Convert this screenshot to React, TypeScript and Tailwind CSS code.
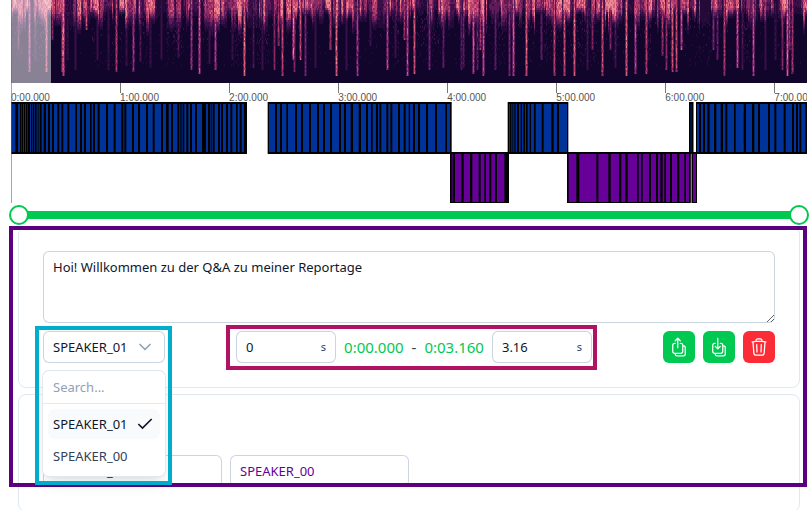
import { useMemo, useState } from "react";
import { Check, ChevronDown } from "lucide-react";
import {
  HiOutlineArrowDownOnSquareStack,
  HiOutlineArrowUpOnSquareStack,
  HiOutlineTrash,
} from "react-icons/hi2";

const SPEC_WIDTH = 796;
const SPEC_HEIGHT = 83;
const SHADES = ["#240939", "#3b0f4a", "#5f1a57", "#8a2a63", "#b53e6c", "#d75d79", "#e98a92"];

// Loud moments that reach into the high frequencies: [x, depth, strength]
const STREAKS: [number, number, number][] = [
  [18, 50, 0.45], [29, 72, 0.75], [35, 60, 0.3], [46, 72, 0.85], [52, 40, 0.6], [62, 72, 0.8], [63, 76, 0.95],
  [67, 60, 0.3], [75, 70, 0.35], [86, 30, 0.8], [97, 60, 0.35], [108, 70, 0.3], [116, 72, 0.75], [126, 65, 0.3],
  [133, 71, 0.7], [140, 62, 0.4], [150, 68, 0.3], [161, 60, 0.35], [178, 58, 0.45], [191, 70, 0.7],
  [199, 73, 0.85], [209, 64, 0.35], [215, 70, 0.8], [232, 60, 0.3], [244, 76, 0.95], [253, 68, 0.4], [262, 70, 0.3],
  [274, 70, 0.6], [278, 45, 0.7], [282, 76, 0.8], [293, 60, 0.95], [294, 72, 0.6], [300, 60, 0.8], [305, 75, 0.6],
  [315, 68, 0.35], [330, 50, 0.75], [336, 76, 0.95], [346, 70, 0.35], [357, 76, 0.7], [370, 46, 0.35],
  [387, 70, 0.8], [395, 58, 0.35], [404, 40, 0.7], [407, 76, 0.8], [414, 74, 0.85], [429, 70, 0.6],
  [443, 68, 0.5], [461, 70, 0.45], [463, 68, 0.5], [473, 74, 0.85], [477, 70, 0.5], [480, 50, 0.7], [483, 76, 0.85],
  [495, 70, 0.5], [509, 76, 0.6], [513, 76, 0.85], [526, 76, 0.9], [541, 60, 0.5], [554, 75, 0.8], [564, 76, 0.85],
  [574, 75, 0.9], [587, 70, 0.4], [592, 50, 0.6], [602, 76, 0.85], [610, 50, 0.6], [615, 68, 0.4],
  [626, 76, 0.9], [635, 74, 0.8], [646, 74, 0.8], [662, 55, 0.7], [666, 70, 0.65], [672, 72, 0.85],
  [676, 72, 0.8], [681, 50, 0.85], [713, 50, 0.6], [717, 60, 0.5], [724, 76, 0.75], [737, 68, 0.85], [742, 70, 0.4],
  [753, 76, 0.8], [765, 70, 0.35], [775, 60, 0.3], [782, 70, 0.6], [787, 76, 0.9], [789, 50, 0.7], [792, 74, 0.7],
];

function createRandom(seed: number) {
  let state = seed;
  return () => {
    state = (state * 1664525 + 1013904223) % 4294967296;
    return state / 4294967296;
  };
}

function buildSpectrogram() {
  const random = createRandom(71);
  const paths: string[][] = SHADES.map(() => []);
  let base = 0.6;
  let target = 0.6;
  let reach = 18;
  let haze = 0.1;
  for (let x = 0; x < SPEC_WIDTH; x += 1) {
    if (random() < 0.45) target = 0.12 + random() * 0.85;
    base += (target - base) * 0.75;
    if (random() < 0.3) reach = 9 + random() * 17;
    if (random() < 0.12) haze = random() < 0.5 ? 0.03 : random() * 0.5;
    const quiet = x + 11 > 699 && x + 11 < 711;
    const hits = STREAKS.filter(([sx]) => Math.abs(sx - 11 - x) <= 1);
    for (let y = 0; y < SPEC_HEIGHT - 3; y += 2) {
      let value = (quiet ? 0.2 : base) * Math.max(0, Math.min(1, 1.5 - y / reach));
      value *= 0.76 + random() * 0.32;
      if (y < 66 && random() < haze) value = Math.max(value, random() * 0.4 * (1 - y / 110));
      for (const [sx, depth, strength] of hits) {
        if (y < depth) {
          const edge = sx - 11 === x ? 1 : 0.6;
          value = Math.max(value, strength * edge * (0.68 + random() * 0.32) * (1 - (y / depth) * 0.12));
        }
      }
      const level = Math.min(SHADES.length - 1, Math.floor((value - 0.1) * 8.5));
      if (level >= 0) paths[level].push(`M${x} ${y}h1v2h-1z`);
    }
  }
  return paths.map((p) => p.join(""));
}

function Spectrogram() {
  const paths = useMemo(buildSpectrogram, []);
  return (
    <svg
      className="block h-[83px] w-full bg-[#12052b]"
      viewBox={`0 0 ${SPEC_WIDTH} ${SPEC_HEIGHT}`}
      preserveAspectRatio="none"
      shapeRendering="crispEdges"
      role="img"
      aria-label="Spectrogram"
    >
      {paths.map((d, i) => (
        <path key={SHADES[i]} d={d} fill={SHADES[i]} />
      ))}
    </svg>
  );
}

type Block = { start: number; end: number; parts: [number, number][] };

// Positions are thirds of a pixel at the base width.
const BLUE_BLOCKS: Block[] = [
  {
    start: 33, end: 741,
    parts: [
      [35, 46], [54, 60], [64, 66], [69, 72], [75, 78], [82, 84], [90, 93], [97, 99], [103, 105], [110, 113],
      [116, 119], [125, 131], [138, 144], [150, 156], [162, 172], [178, 184], [190, 202], [208, 226], [231, 240],
      [246, 252], [258, 270], [275, 279], [285, 293], [299, 318], [324, 341], [347, 364], [370, 373], [379, 396],
      [402, 414], [420, 438], [444, 458], [464, 483], [489, 498], [506, 513], [519, 532], [538, 541], [545, 548],
      [553, 559], [565, 570], [576, 585], [591, 606], [618, 624], [630, 632], [635, 638], [644, 654], [660, 663],
      [669, 678], [684, 691], [697, 708], [713, 719], [725, 732],
    ],
  },
  {
    start: 803, end: 1355,
    parts: [
      [807, 825], [831, 840], [846, 859], [864, 885], [891, 903], [909, 927], [933, 951], [957, 969], [975, 990],
      [996, 1017], [1023, 1032], [1038, 1052], [1059, 1076], [1083, 1098], [1104, 1113], [1118, 1128],
      [1134, 1138], [1144, 1159], [1165, 1171], [1177, 1194], [1200, 1211], [1217, 1226], [1230, 1239],
      [1245, 1254], [1260, 1278], [1284, 1305], [1311, 1336], [1341, 1350],
    ],
  },
  {
    start: 1523, end: 1705,
    parts: [
      [1527, 1530], [1534, 1537], [1540, 1543], [1547, 1551], [1557, 1562], [1566, 1570], [1575, 1578],
      [1583, 1589], [1593, 1602], [1607, 1625], [1631, 1654], [1661, 1671], [1677, 1701],
    ],
  },
  { start: 2067, end: 2080, parts: [[2072, 2074]] },
  {
    start: 2088, end: 2421,
    parts: [
      [2091, 2097], [2103, 2109], [2115, 2122], [2129, 2142], [2149, 2162], [2169, 2176], [2182, 2202],
      [2207, 2231], [2238, 2256], [2263, 2274], [2280, 2304], [2310, 2323], [2329, 2351], [2357, 2376],
      [2382, 2388], [2394, 2398], [2404, 2416],
    ],
  },
];

const PURPLE_BLOCKS: Block[] = [
  {
    start: 1350, end: 1527,
    parts: [
      [1355, 1358], [1365, 1384], [1391, 1410], [1417, 1436], [1442, 1453], [1458, 1468], [1474, 1485], [1491, 1513],
    ],
  },
  {
    start: 1701, end: 2091,
    parts: [
      [1706, 1729], [1738, 1789], [1795, 1825], [1832, 1857], [1864, 1876], [1883, 1911], [1916, 1923],
      [1928, 1947], [1953, 1968], [1974, 1981], [1988, 1993], [1998, 2010], [2016, 2031], [2038, 2053],
      [2058, 2067], [2079, 2088],
    ],
  },
];

function SpeakerTracks() {
  return (
    <svg
      className="block h-[101px] w-full"
      viewBox="33 0 2388 101"
      preserveAspectRatio="none"
      role="img"
      aria-label="Speaker segments"
    >
      {PURPLE_BLOCKS.map((b) => (
        <g key={b.start}>
          <rect x={b.start} y={50} width={b.end - b.start} height={51} fill="#000" />
          {b.parts.map(([s, e]) => (
            <rect key={s} x={s} y={52} width={e - s} height={48} fill="#660099" />
          ))}
        </g>
      ))}
      <rect x={2072} y={52} width={4} height={49} fill="#777" />
      <rect x={2080} y={0} width={2} height={50} fill="#999" />
      {BLUE_BLOCKS.map((b) => (
        <g key={b.start}>
          <rect x={b.start} y={0} width={b.end - b.start} height={52} fill="#000" />
          {b.parts.map(([s, e]) => (
            <rect key={s} x={s} y={2} width={e - s} height={48} fill="#003399" />
          ))}
        </g>
      ))}
    </svg>
  );
}

const MINUTES = [0, 1, 2, 3, 4, 5, 6, 7];

function Timeline() {
  return (
    <div className="relative ml-[11px] mr-[3px] overflow-hidden">
      <Spectrogram />
      <div className="flex h-[19px]">
        {MINUTES.map((m) => (
          <div key={m} className="w-[13.7%] shrink-0">
            <div className={m === 0 ? "h-2.5" : "h-2.5 border-l border-[#777777]"} />
            <div className="font-['Liberation_Sans',Arial,sans-serif] text-[10px] leading-[10px] text-[#555555]">
              {m}:00.000
            </div>
          </div>
        ))}
      </div>
      <SpeakerTracks />
      <div className="absolute left-0 top-0 h-[83px] w-[5%] bg-white/50" />
      <div className="absolute inset-y-0 left-0 w-px bg-red-500/60" />
    </div>
  );
}

const THUMB =
  "pointer-events-none col-start-1 row-start-1 h-5 w-full appearance-none bg-transparent outline-none [&::-webkit-slider-thumb]:pointer-events-auto [&::-webkit-slider-thumb]:h-5 [&::-webkit-slider-thumb]:w-5 [&::-webkit-slider-thumb]:appearance-none [&::-webkit-slider-thumb]:rounded-full [&::-webkit-slider-thumb]:border-2 [&::-webkit-slider-thumb]:border-[#00c951] [&::-webkit-slider-thumb]:bg-white";

function RangeSlider() {
  const [from, setFrom] = useState(0);
  const [to, setTo] = useState(100);
  return (
    <div className="mb-px ml-[9px] mr-px mt-0.5 grid items-center">
      <div className="col-start-1 row-start-1 mx-2.5 h-2 bg-[#00c951]" />
      <input
        type="range"
        aria-label="Range start"
        value={from}
        onChange={(e) => setFrom(Math.min(Number(e.target.value), to))}
        className={THUMB}
      />
      <input
        type="range"
        aria-label="Range end"
        value={to}
        onChange={(e) => setTo(Math.max(Number(e.target.value), from))}
        className={THUMB}
      />
    </div>
  );
}

function SecondsInput({ label, initial }: { label: string; initial: string }) {
  return (
    <div className="flex h-8 w-[100px] items-center rounded-md bg-white px-2.5 ring-1 ring-inset ring-slate-300">
      <input
        aria-label={label}
        defaultValue={initial}
        className="w-full min-w-0 bg-transparent text-[13px] leading-5 text-slate-900 outline-none"
      />
      <span className="text-[11px] text-slate-700">s</span>
    </div>
  );
}

function SpeakerSelect() {
  const [speaker, setSpeaker] = useState("SPEAKER_01");
  return (
    <div className="relative w-[122px]">
      <button
        type="button"
        aria-haspopup="listbox"
        aria-expanded="true"
        className="flex h-8 w-full items-center justify-between rounded-md bg-white px-2.5 text-[13px] leading-5 text-slate-900 ring-1 ring-inset ring-slate-300"
      >
        {speaker}
        <ChevronDown className="size-5 shrink-0 text-slate-400" />
      </button>
      <div className="absolute inset-x-0 top-10 z-10 rounded-md bg-white shadow-lg ring-1 ring-slate-200">
        <input
          aria-label="Search speakers"
          placeholder="Search..."
          className="block h-[33px] w-full border-b border-slate-200 bg-transparent px-2.5 text-[13px] leading-5 outline-none placeholder:text-slate-400"
        />
        <ul role="listbox" aria-label="Speakers" className="p-1">
          {["SPEAKER_01", "SPEAKER_00"].map((name) => (
            <li
              key={name}
              role="option"
              aria-selected={name === speaker}
              onClick={() => setSpeaker(name)}
              className={
                name === speaker
                  ? "flex h-8 items-center justify-between rounded-lg border border-white bg-slate-50 px-[5px] text-[13px] leading-5 text-slate-900"
                  : "flex h-8 items-center justify-between rounded-lg border border-white px-[5px] text-[13px] leading-5 text-slate-700"
              }
            >
              {name}
              {name === speaker && <Check className="size-5 shrink-0" strokeLinecap="butt" strokeLinejoin="miter" />}
            </li>
          ))}
        </ul>
      </div>
      <div className="pointer-events-none absolute -left-2 -right-[7px] -top-[5px] z-30 h-[159px] border-4 border-[#00adcc]" />
    </div>
  );
}

function SegmentCard() {
  return (
    <article className="rounded-lg border border-slate-200 bg-white p-6">
      <textarea
        aria-label="Segment text"
        rows={3}
        defaultValue="Hoi! Willkommen zu der Q&A zu meiner Reportage"
        className="block w-full rounded-md bg-white px-2.5 py-1.5 text-[13px] leading-5 text-slate-900 outline-none ring-1 ring-inset ring-slate-300"
      />
      <div className="mt-2 flex items-center justify-between">
        <SpeakerSelect />
        <div className="relative flex items-center gap-2">
          <SecondsInput label="Start in seconds" initial="0" />
          <span className="text-[15px] text-[#00c951]">0:00.000</span>
          <span className="text-[15px] text-slate-700">-</span>
          <span className="text-[15px] text-[#00c951]">0:03.160</span>
          <SecondsInput label="End in seconds" initial="3.16" />
          <div className="pointer-events-none absolute -bottom-[7px] -left-2.5 -right-[5px] -top-1.5 z-20 border-4 border-[#b01264]" />
        </div>
        <div className="flex gap-2">
          <button
            type="button"
            aria-label="Insert segment above"
            className="flex size-8 items-center justify-center rounded-md bg-[#00c951] text-white"
          >
            <HiOutlineArrowUpOnSquareStack className="size-5" />
          </button>
          <button
            type="button"
            aria-label="Insert segment below"
            className="flex size-8 items-center justify-center rounded-md bg-[#00c951] text-white"
          >
            <HiOutlineArrowDownOnSquareStack className="size-5" />
          </button>
          <button
            type="button"
            aria-label="Delete segment"
            className="flex size-8 items-center justify-center rounded-md bg-[#fb2c36] text-white"
          >
            <HiOutlineTrash className="size-5" />
          </button>
        </div>
      </div>
    </article>
  );
}

function SpeakersCard() {
  return (
    <article className="rounded-lg border border-slate-200 bg-white p-6">
      <div className="flex gap-2 pt-9">
        <input
          aria-label="First speaker name"
          defaultValue="SPEAKER_01"
          className="h-8 w-[179px] rounded-md bg-white px-2.5 text-[13px] leading-5 text-[#003399] outline-none ring-1 ring-inset ring-slate-300"
        />
        <input
          aria-label="Second speaker name"
          defaultValue="SPEAKER_00"
          className="h-8 w-[179px] rounded-md bg-white px-2.5 text-[13px] leading-5 text-[#660099] outline-none ring-1 ring-inset ring-slate-300"
        />
      </div>
    </article>
  );
}

export default function App() {
  return (
    <main className="h-screen overflow-hidden bg-white font-['Noto_Sans','Open_Sans',sans-serif] text-slate-900">
      <Timeline />
      <RangeSlider />
      <section className="relative ml-[18px] mr-2.5 flex flex-col gap-1.5">
        <SegmentCard />
        <SpeakersCard />
        <div className="pointer-events-none absolute -left-[9px] -right-[7px] top-0 z-20 h-[261px] border-4 border-[#5c0080]" />
      </section>
    </main>
  );
}
